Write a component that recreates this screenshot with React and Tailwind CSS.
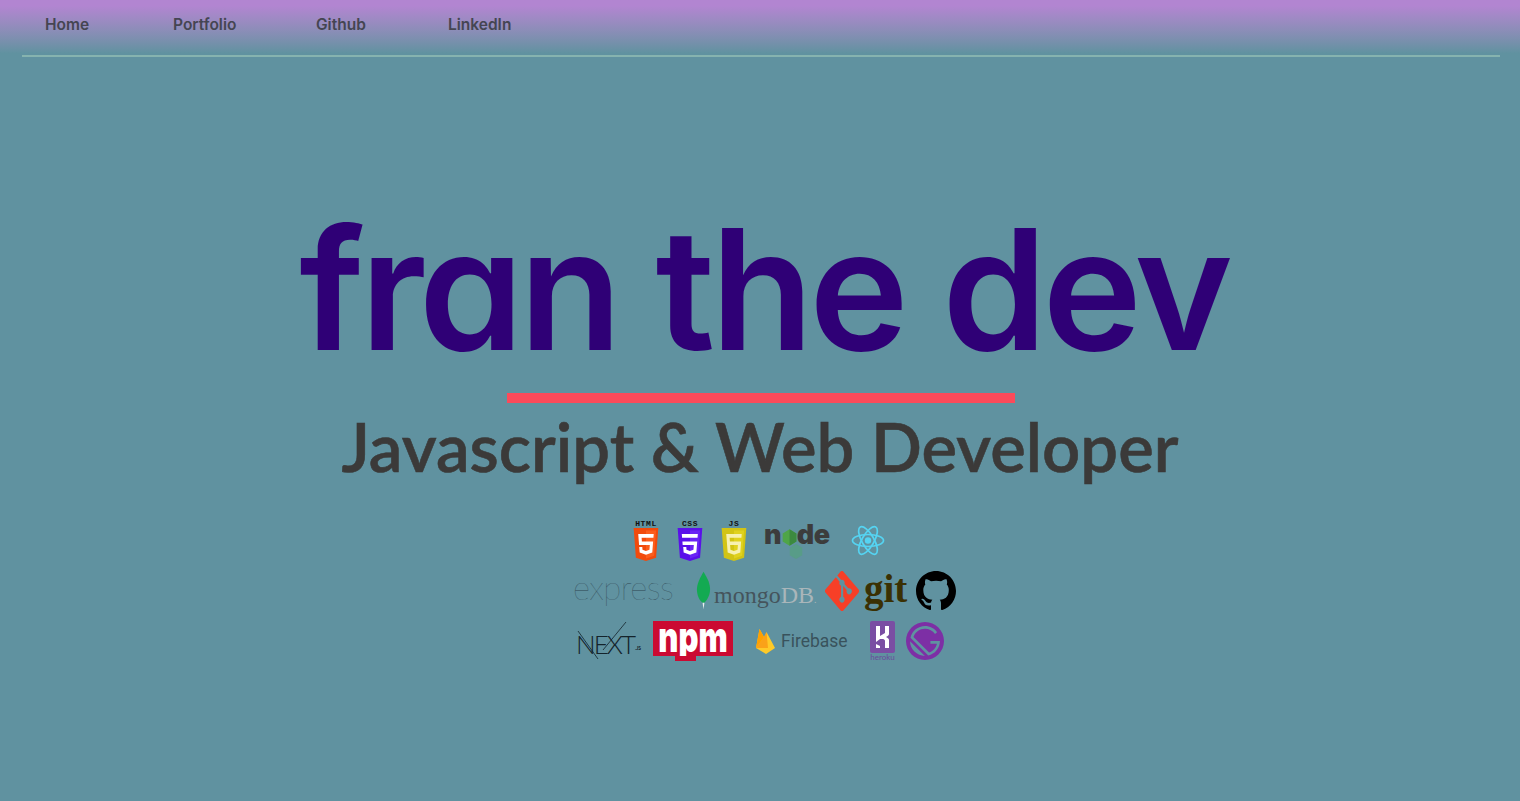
import React from "react";
import { SiGatsby } from "react-icons/si";

const Shield = ({ label, c1, c2, children, className = "" }) => (
  <div className={`flex flex-col items-center w-[28px] ${className}`}>
    <span className="font-['Liberation_Mono',monospace] font-bold text-[8px] leading-[8px] h-[8px] text-[#111] tracking-[0.6px]">{label}</span>
    <svg viewBox="0 0 512 512" preserveAspectRatio="none" className="w-[28px] h-[33px]">
      <path d="M30 0h451l-41 460-185 52-184-52z" fill={c1} />
      <path d="M256 472l149-41 35-394H256z" fill={c2} />
      {children}
    </svg>
  </div>
);

function Logos() {
  return (
    <div className="flex flex-col w-[400px]">
      <div className="flex items-start h-[51px] pl-[72px]">
        <Shield label="HTML" c1="#f24a0c" c2="#fb5d1c">
          <path d="M114 94h283l-5 56H176l5 58h205l-15 174-115 32-116-32-8-89h56l4 45 64 17 63-17 7-73H129z" fill="#fff" />
        </Shield>
        <Shield label="CSS" c1="#5a10ea" c2="#6a22f5" className="ml-[16px]">
          <path d="M106 94h293l-5 56H111zM117 208h271l-16 174-116 32-116-32-8-89h56l4 45 64 17 63-17 7-73H122z" fill="#fff" />
        </Shield>
        <Shield label="JS" c1="#d2c414" c2="#e0d21e" className="ml-[16px]">
          <path fillRule="evenodd" d="M114 94h283l-5 56H176l5 58h205l-15 174-115 32-116-32zM185 265l6 73 65 17 65-17 6-73z" fill="#f7f1b0" />
        </Shield>
        <div className="relative w-[66px] h-[38px] ml-[16px] flex items-start font-['Inter',sans-serif] font-black text-[27px] leading-[30px] text-[#3c3c3c]">
          <span className="w-[18px]">n</span>
          <svg viewBox="0 0 22 24" className="w-[16px] h-[19px] mt-[8px]">
            <path d="M11 0l10 6v12l-10 6-10-6V6z" fill="#4fa548" />
            <path d="M11 0l10 6v12l-10 6z" fill="#3c8a3f" />
          </svg>
          <span className="w-[17px]">d</span>
          <span>e</span>
          <svg viewBox="0 0 22 24" className="absolute left-[24px] top-[24px] w-[16px] h-[15px]">
            <path d="M11 0l10 6v12l-10 6-10-6V6z" fill="#4fa56f" opacity="0.5" />
          </svg>
        </div>
        <svg viewBox="-17 -15.5 34 31" className="w-[34px] h-[31px] ml-[21px] mt-[5px]" fill="none" stroke="#55d4f2" strokeWidth="1.7">
          <circle r="3.2" fill="#55d4f2" stroke="none" />
          <ellipse rx="15.5" ry="6" />
          <ellipse rx="15.5" ry="6" transform="rotate(60)" />
          <ellipse rx="15.5" ry="6" transform="rotate(120)" />
        </svg>
      </div>
      <div className="flex items-start h-[50px] pl-[14px]">
        <span className="font-['Lato',sans-serif] font-thin text-[33px] leading-[36px] -mt-[2px] -ml-[1px] text-[#2f4752] w-[123px] tracking-[-0.6px]">express</span>
        <svg viewBox="0 0 16 40" className="w-[15px] h-[39px] mt-0">
          <path d="M8 0c5 8 7 13 7 19 0 7-4 12-6 14H7C4 31 1 26 1 19 1 13 4 7 8 0z" fill="#13aa52" />
          <path d="M7 33h2l-1 7z" fill="#e8f0ee" />
        </svg>
        <span className="font-['Liberation_Serif',serif] text-[24px] leading-[28px] text-[#45545c] mt-[10px] w-[112px] ml-[3px] whitespace-nowrap">mongo<span className="text-[#aab6ba]">DB</span><span className="text-[10px] text-[#aab6ba]">.</span></span>
        <svg viewBox="0 0 92 92" preserveAspectRatio="none" className="w-[34px] h-[40px] -ml-[1px]">
          <path fill="#f73f27" d="M90.156 41.965 50.036 1.848a5.918 5.918 0 0 0-8.372 0l-8.328 8.332 10.566 10.566a7.03 7.03 0 0 1 7.23 1.684 7.034 7.034 0 0 1 1.669 7.277l10.187 10.184a7.028 7.028 0 0 1 7.278 1.672 7.04 7.04 0 0 1 0 9.957 7.05 7.05 0 0 1-9.965 0 7.044 7.044 0 0 1-1.528-7.66l-9.5-9.497V59.36a7.04 7.04 0 0 1 1.86 11.29 7.04 7.04 0 0 1-9.957 0 7.04 7.04 0 0 1 0-9.958 7.06 7.06 0 0 1 2.304-1.539V33.926a7.049 7.049 0 0 1-3.82-9.234L29.242 14.272 1.73 41.777a5.925 5.925 0 0 0 0 8.371L41.852 90.27a5.925 5.925 0 0 0 8.37 0l39.934-39.934a5.925 5.925 0 0 0 0-8.371" />
        </svg>
        <span className="font-['Liberation_Serif',serif] font-bold text-[39px] leading-[36px] text-[#3a3003] ml-[5px] w-[52px]">git</span>
        <svg viewBox="0 0 16 16" className="w-[40px] h-[40px]" fill="#000">
          <path d="M8 0C3.58 0 0 3.58 0 8c0 3.54 2.29 6.53 5.47 7.59.4.07.55-.17.55-.38 0-.19-.01-.82-.01-1.49-2.01.37-2.53-.49-2.69-.94-.09-.23-.48-.94-.82-1.13-.28-.15-.68-.52-.01-.53.63-.01 1.08.58 1.23.82.72 1.21 1.87.87 2.33.66.07-.52.28-.87.51-1.07-1.78-.2-3.64-.89-3.64-3.95 0-.87.31-1.59.82-2.15-.08-.2-.36-1.02.08-2.12 0 0 .67-.21 2.2.82.64-.18 1.32-.27 2-.27s1.36.09 2 .27c1.53-1.04 2.2-.82 2.2-.82.44 1.1.16 1.92.08 2.12.51.56.82 1.27.82 2.15 0 3.07-1.87 3.75-3.65 3.95.29.25.54.73.54 1.48 0 1.07-.01 1.93-.01 2.2 0 .21.15.46.55.38A8.01 8.01 0 0016 8c0-4.42-3.58-8-8-8z" />
        </svg>
      </div>
      <div className="flex items-start h-[44px] pl-[16px]">
        <div className="relative w-[77px] h-[40px] flex items-start">
          <span className="font-['Lato',sans-serif] font-light text-[26px] leading-[30px] mt-[8px] tracking-[-2px] text-[#14232b] w-[59px]">NEXT</span>
          <span className="font-['Lato',sans-serif] font-bold text-[5px] leading-[6px] text-[#14232b] mt-[24px]">.JS</span>
          <svg viewBox="0 0 68 40" className="absolute left-0 top-0 w-[68px] h-[40px]" fill="none" stroke="#14232b" strokeWidth="0.8">
            <path d="M2 10l20 28M50 1L27 29" />
          </svg>
        </div>
        <div className="relative w-[80px] h-[40px]">
          <div className="h-[35px] bg-[#cb0a32] flex justify-center">
            <span className="font-['Inter',sans-serif] font-black text-[31px] leading-[24px] text-white scale-y-[1.35] origin-top h-[24px]">npm</span>
          </div>
          <div className="absolute left-[22px] top-[35px] w-[21px] h-[5px] bg-[#cb0a32]" />
        </div>
        <svg viewBox="0 0 20 26" className="w-[20px] h-[26px] ml-[23px] mt-[7px]">
          <path d="M0 20L3.5 1 8 9l2.5-5L19 20l-9 6z" fill="#ffca28" />
          <path d="M0 20L3.5 1 8 9z" fill="#ffa000" />
          <path d="M0 20l8-11 2.5-5L12 20z" fill="#f6820c" opacity="0.55" />
        </svg>
        <span className="font-['Roboto',sans-serif] text-[17.5px] leading-[24px] text-[#39525c] ml-[5px] mt-[8px] w-[89px]">Firebase</span>
        <div className="flex flex-col items-center w-[25px]">
          <svg viewBox="0 0 25 32" className="w-[25px] h-[32px]">
            <rect width="25" height="32" rx="2" fill="#7a4ea3" />
            <path d="M6 5h4v10l5-3V5h4v8c0 1-1 2-3 3 2 1 3 2 3 3v8h-4v-7c0-1-1-2-2-2h-3l-4 3zM6 23l4 2v2H6z" fill="#fff" />
          </svg>
          <span className="font-['Lato',sans-serif] text-[8px] leading-[8px] text-[#6a4a9c]">heroku</span>
        </div>
        <SiGatsby className="w-[38px] h-[38px] ml-[11px] mt-[1px] text-[#7d2fa5]" />
      </div>
    </div>
  );
}

export default function App() {
  return (
    <div className="h-[801px] overflow-hidden bg-[#6092a0] font-['Open_Sans',sans-serif]">
      <header className="h-[58px] bg-gradient-to-b from-[#b285d1] from-[10%] to-[#6092a0] to-[92%] pl-[22px] pr-[20px]">
        <nav className="h-[57px] flex items-start pl-[23px] pt-[15px] border-b-2 border-[#86b3af] font-['Inter',sans-serif] font-semibold text-[15.5px] leading-[20px] text-[#454552]">
          <a className="w-[128px]">Home</a>
          <a className="w-[143px]">Portfolio</a>
          <a className="w-[132px]">Github</a>
          <a>LinkedIn</a>
        </nav>
      </header>
      <main className="flex flex-col items-center">
        <h1 className="mt-[146px] h-[170px] font-['Inter',sans-serif] font-semibold text-[168px] leading-[170px] text-[#2f0076] tracking-[-4.4px] [font-feature-settings:'cv11'] whitespace-nowrap translate-x-[4px]">fran the dev</h1>
        <div className="mt-[19px] w-[508px] h-[10px] bg-[#fc4a5a] translate-x-[1px]" />
        <h2 className="h-[88px] font-['Lato',sans-serif] font-semibold text-[67px] leading-[88px] text-[#3b3a39] [-webkit-text-stroke:0.6px_#3b3a39] whitespace-nowrap -translate-y-[1px]">Javascript &amp; Web Developer</h2>
        <div className="mt-[29px]"><Logos /></div>
      </main>
    </div>
  );
}
